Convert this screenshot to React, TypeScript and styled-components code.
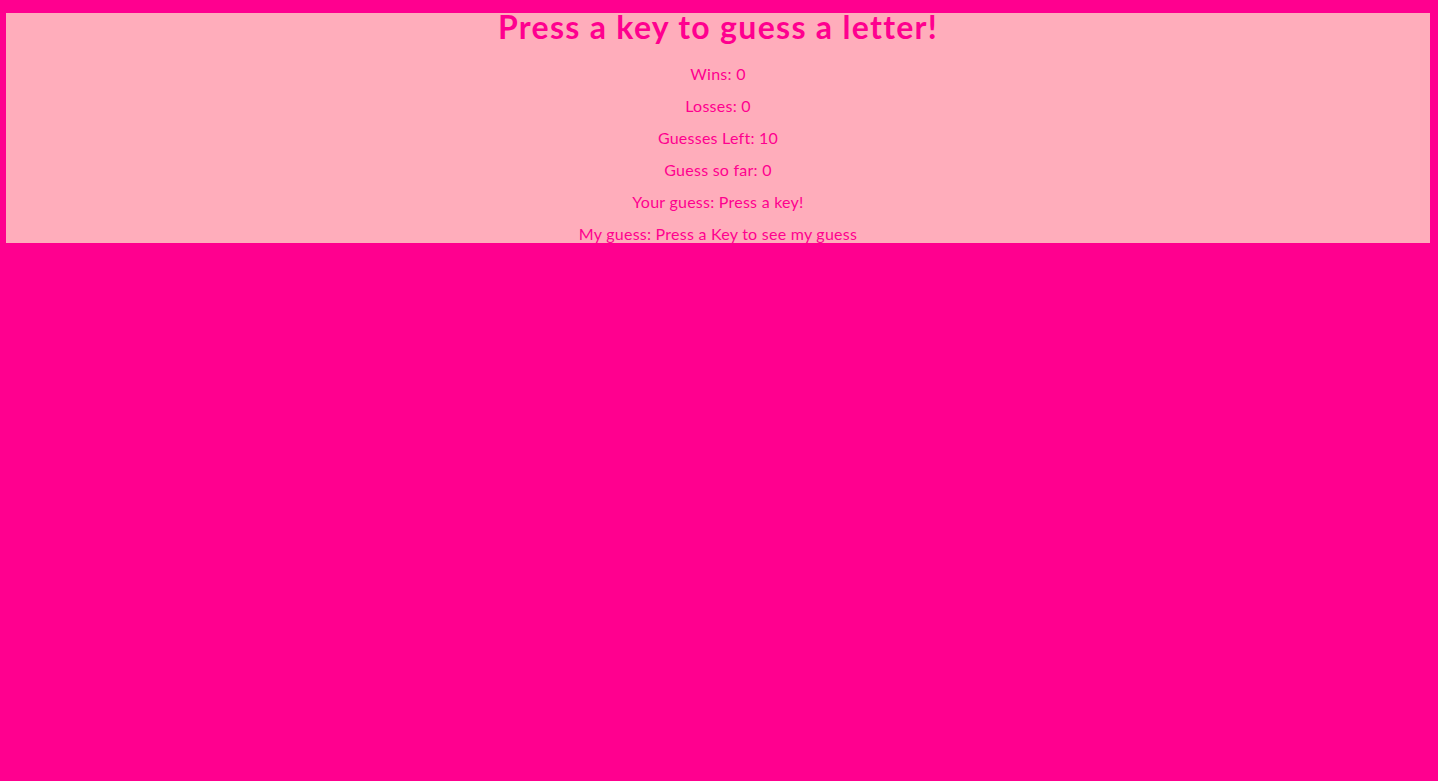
import React from "react";
import styled, { createGlobalStyle } from "styled-components";

const Global = createGlobalStyle`
  html, body { margin: 0; padding: 0; }
  body {
    background: #ff008f;
    min-height: 781px;
    font-family: "Lato", "Noto Sans", sans-serif;
    color: #ff008f;
  }
  #root { padding: 13px 8px 0 6px; }
`;

const Board = styled.div`
  height: 230px;
  background: #ffadbb;
  text-align: center;
  display: flex;
  flex-direction: column;
  align-items: center;
`;

const Title = styled.h1`
  margin: 0 0 17px;
  font-size: 32px;
  line-height: 28px;
  font-weight: 700;
  letter-spacing: 1.3px;
`;

const Stat = styled.p`
  margin: 0;
  font-size: 16px;
  line-height: 32px;
  letter-spacing: 0.25px;
`;

const stats = [
  "Wins: 0",
  "Losses: 0",
  "Guesses Left: 10",
  "Guess so far: 0",
  "Your guess: Press a key!",
  "My guess: Press a Key to see my guess",
];

export default function App() {
  return (
    <>
      <Global />
      <Board>
        <Title>Press a key to guess a letter!</Title>
        {stats.map((s) => (
          <Stat key={s}>{s}</Stat>
        ))}
      </Board>
    </>
  );
}
